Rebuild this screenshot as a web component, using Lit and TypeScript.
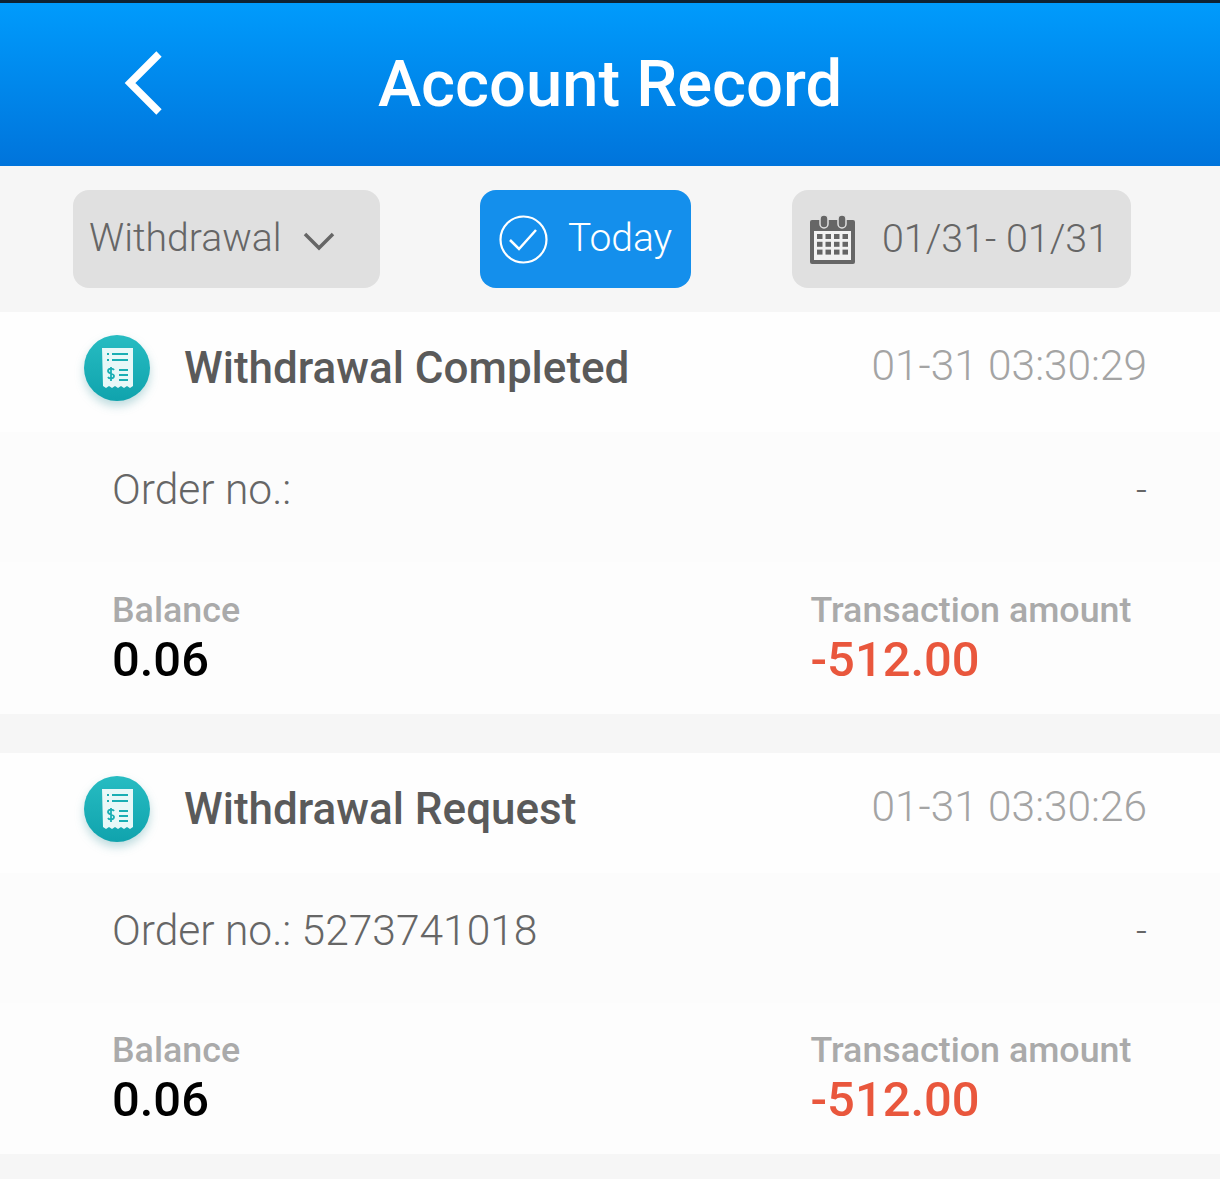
import { LitElement, html, css, svg } from 'lit';
import { customElement } from 'lit/decorators.js';

const records = [
  { title: 'Withdrawal Completed', time: '01-31 03:30:29', order: 'Order no.:', balance: '0.06', amount: '-512.00' },
  { title: 'Withdrawal Request', time: '01-31 03:30:26', order: 'Order no.: 5273741018', balance: '0.06', amount: '-512.00' },
];

const receipt = html`<svg class="receipt" viewBox="0 0 66 66" width="66" height="66">
  <defs>
    <linearGradient id="teal" x1="0" y1="0" x2="0" y2="1">
      <stop offset="0" stop-color="#27bcc2"></stop>
      <stop offset="1" stop-color="#10a3ad"></stop>
    </linearGradient>
  </defs>
  <circle cx="33" cy="33" r="33" fill="url(#teal)"></circle>
  <path d="M18 13h31v38l-3 2-3-2-3 2-3-2-3 2-3-2-3 2-3-2-3 2-3-2z" fill="#e8f8f8"></path>
  <path d="M23 19h2M23 25h2M28 19h16M28 25h16M35 35h9M35 40h9M35 45h9" stroke="#1aaeb4" stroke-width="2.2" fill="none"></path>
  <path d="M30 35c-1-2-6-2-6 1s6 2 6 5-5 3-6 1M27 32v14" stroke="#1aaeb4" stroke-width="1.8" fill="none"></path>
</svg>`;

const calendarCells = [0, 1, 2, 3].flatMap((c) =>
  [0, 1, 2].map((r) => svg`<rect x=${7 + c * 8.5} y=${19 + r * 7.8} width="5.5" height="5" fill="#666"></rect>`)
);

@customElement('app-root')
export class AppRoot extends LitElement {
  static styles = css`
    :host {
      display: block;
      height: 1179px;
      overflow: hidden;
      background: #f6f6f6;
      font-family: Roboto, "Liberation Sans", sans-serif;
    }
    .header {
      height: 163px;
      border-top: 3px solid #0e2233;
      background: linear-gradient(#009bfc, #0074db);
      display: flex;
      align-items: center;
      justify-content: center;
      position: relative;
    }
    .back {
      position: absolute;
      left: 120px;
      top: 45px;
    }
    .header h1 {
      margin: 0;
      color: #fff;
      font-size: 65.1px;
      font-weight: 500;
      line-height: 1;
    }
    .filters {
      height: 146px;
      box-sizing: border-box;
      padding: 24px 0 24px 73px;
      display: flex;
      gap: 100px;
    }
    .pill {
      height: 98px;
      border-radius: 16px;
      background: #e0e0e0;
      color: #666;
      font-size: 39.4px;
      font-weight: 300;
      display: flex;
      align-items: center;
      box-sizing: border-box;
    }
    .pill span {
      margin-top: -2px;
    }
    .type {
      width: 307px;
      padding-left: 16px;
      gap: 21px;
      font-size: 39.2px;
    }
    .type svg {
      margin-top: 3px;
    }
    .today {
      width: 211px;
      background: #148fec;
      color: #fff;
      padding-left: 19px;
      gap: 20px;
      font-size: 39px;
    }
    .range {
      width: 339px;
      margin-left: 1px;
      padding-left: 18px;
      gap: 27px;
    }
    .card {
      height: 402px;
      background: #fcfcfc;
      margin-bottom: 39px;
      display: flex;
      flex-direction: column;
    }
    .card + .card {
      height: 401px;
    }
    .card + .card .totals {
      padding-top: 26px;
    }
    .card-head {
      height: 120px;
      box-sizing: border-box;
      padding: 23px 73px 0 84px;
      display: flex;
      align-items: flex-start;
      background: #fefefe;
    }
    .receipt {
      filter: drop-shadow(0 5px 5px rgba(20, 130, 140, 0.28));
      flex: none;
    }
    .title {
      margin: 7px 0 0 34px;
      font-size: 44px;
      font-weight: 500;
      color: #5a5a5a;
      line-height: 52px;
      flex: 1;
    }
    .time {
      margin-top: 6px;
      font-size: 42.4px;
      font-weight: 300;
      color: #a4a4a4;
      line-height: 49px;
    }
    .order {
      height: 130px;
      box-sizing: border-box;
      padding: 0 73px 16px 112px;
      display: flex;
      align-items: center;
      justify-content: space-between;
      font-size: 42.5px;
      font-weight: 300;
      color: #666;
    }
    .order .dash {
      font-size: 38px;
      margin-top: 2px;
    }
    .totals {
      flex: 1;
      background: #fdfdfd;
      padding: 27px 0 0 112px;
      display: grid;
      grid-template-columns: 698.5px 1fr;
    }
    .label {
      font-size: 35.8px;
      font-weight: 500;
      line-height: 42px;
      color: #aaa;
    }
    .value {
      margin-top: 1px;
      font-size: 48.9px;
      font-weight: 500;
      line-height: 56px;
      color: #000;
    }
    .value.neg {
      color: #e9573d;
    }
  `;

  render() {
    return html`
      <div class="header">
        <svg class="back" width="44" height="70" viewBox="0 0 44 70">
          <path d="M39 6L10 35l29 29" fill="none" stroke="#fff" stroke-width="7.5"></path>
        </svg>
        <h1>Account Record</h1>
      </div>
      <div class="filters">
        <div class="pill type">
          <span>Withdrawal</span>
          <svg width="32" height="20" viewBox="0 0 32 20">
            <path d="M2 3l14 14L30 3" fill="none" stroke="#666" stroke-width="3.5"></path>
          </svg>
        </div>
        <div class="pill today">
          <svg width="49" height="49" viewBox="0 0 49 49">
            <circle cx="24.5" cy="24.5" r="23" fill="none" stroke="#fff" stroke-width="2.2"></circle>
            <path d="M11 25l9 9 17-19" fill="none" stroke="#fff" stroke-width="2.5"></path>
          </svg>
          <span>Today</span>
        </div>
        <div class="pill range">
          <svg width="45" height="49" viewBox="0 0 45 49">
            <rect x="0" y="5" width="45" height="44" rx="2" fill="#666"></rect>
            <rect x="4" y="16" width="37" height="29" fill="#f2f2f2"></rect>
            <rect x="10" y="0" width="8" height="13" rx="4" fill="#666" stroke="#e0e0e0" stroke-width="1.5"></rect>
            <rect x="28" y="0" width="8" height="13" rx="4" fill="#666" stroke="#e0e0e0" stroke-width="1.5"></rect>
            ${calendarCells}
          </svg>
          <span>01/31- 01/31</span>
        </div>
      </div>
      ${records.map(
        (r) => html`
          <div class="card">
            <div class="card-head">
              ${receipt}
              <div class="title">${r.title}</div>
              <div class="time">${r.time}</div>
            </div>
            <div class="order">
              <span>${r.order}</span>
              <span class="dash">-</span>
            </div>
            <div class="totals">
              <div>
                <div class="label">Balance</div>
                <div class="value">${r.balance}</div>
              </div>
              <div>
                <div class="label">Transaction amount</div>
                <div class="value neg">${r.amount}</div>
              </div>
            </div>
          </div>
        `
      )}
    `;
  }
}
